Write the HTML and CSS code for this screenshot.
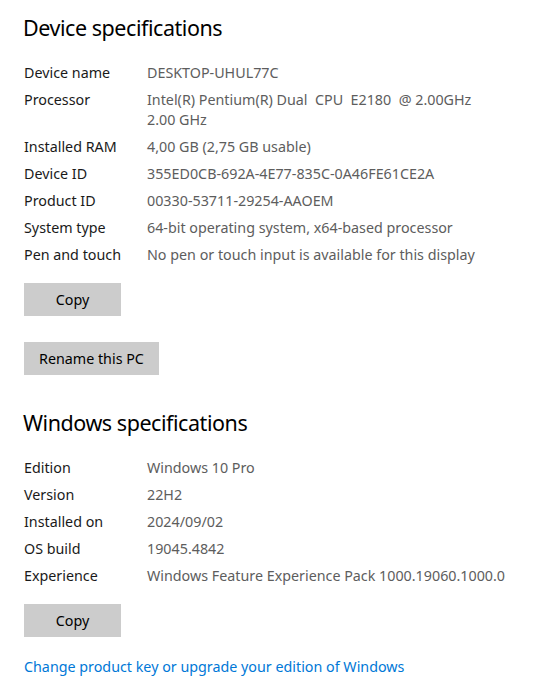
FILE: index.html
```html
<!DOCTYPE html>
<html lang="en">
<head>
<meta charset="utf-8">
<title>About</title>
<link rel="stylesheet" href="styles.css">
</head>
<body>
<main class="page">
  <section class="section">
    <h2 class="heading">Device specifications</h2>
    <dl class="specs">
      <dt>Device name</dt><dd>DESKTOP-UHUL77C</dd>
      <dt>Processor</dt><dd class="pre">Intel(R) Pentium(R) Dual  CPU  E2180  @ 2.00GHz<br>2.00 GHz</dd>
      <dt>Installed RAM</dt><dd>4,00 GB (2,75 GB usable)</dd>
      <dt>Device ID</dt><dd>355ED0CB-692A-4E77-835C-0A46FE61CE2A</dd>
      <dt>Product ID</dt><dd>00330-53711-29254-AAOEM</dd>
      <dt>System type</dt><dd>64-bit operating system, x64-based processor</dd>
      <dt>Pen and touch</dt><dd>No pen or touch input is available for this display</dd>
    </dl>
    <div class="actions">
      <button class="btn btn-copy" type="button">Copy</button>
      <button class="btn" type="button">Rename this PC</button>
    </div>
  </section>
  <section class="section section-win">
    <h2 class="heading">Windows specifications</h2>
    <dl class="specs">
      <dt>Edition</dt><dd>Windows 10 Pro</dd>
      <dt>Version</dt><dd>22H2</dd>
      <dt>Installed on</dt><dd>2024/09/02</dd>
      <dt>OS build</dt><dd>19045.4842</dd>
      <dt>Experience</dt><dd>Windows Feature Experience Pack 1000.19060.1000.0</dd>
    </dl>
    <div class="actions">
      <button class="btn btn-copy" type="button">Copy</button>
    </div>
    <a class="link" href="#">Change product key or upgrade your edition of Windows</a>
  </section>
</main>
</body>
</html>
```
FILE: styles.css
```css
html, body {
  margin: 0;
  padding: 0;
  background: #ffffff;
}
body {
  font-family: "Noto Sans", "Open Sans", sans-serif;
  font-size: 14.3px;
  color: #1a1a1a;
}
.page {
  padding: 13px 0 0 24px;
}
.heading {
  margin: 0;
  font-size: 21.5px;
  letter-spacing: -0.45px;
  font-weight: 400;
  line-height: 30px;
  color: #000000;
  margin-left: -1px;
}
.specs {
  margin: 20px 0 0 0;
  display: grid;
  grid-template-columns: 123px 1fr;
  row-gap: 7px;
  line-height: 20px;
}
.specs dt {
  margin: 0;
  color: #1a1a1a;
}
.specs dd {
  margin: 0;
  color: #5d5d5d;
}
.pre {
  white-space: pre;
}
.actions {
  display: flex;
  flex-direction: column;
  align-items: flex-start;
  gap: 26px;
  margin-top: 18px;
}
.btn {
  font: inherit;
  font-size: 14.3px;
  color: #000000;
  background: #cccccc;
  border: none;
  border-radius: 0;
  height: 33px;
  padding: 0 15px;
  min-width: 97px;
  cursor: pointer;
}
.section-win {
  margin-top: 33px;
}
.link {
  display: block;
  margin-top: 20px;
  line-height: 20px;
  color: #0078d7;
  text-decoration: none;
}
```
